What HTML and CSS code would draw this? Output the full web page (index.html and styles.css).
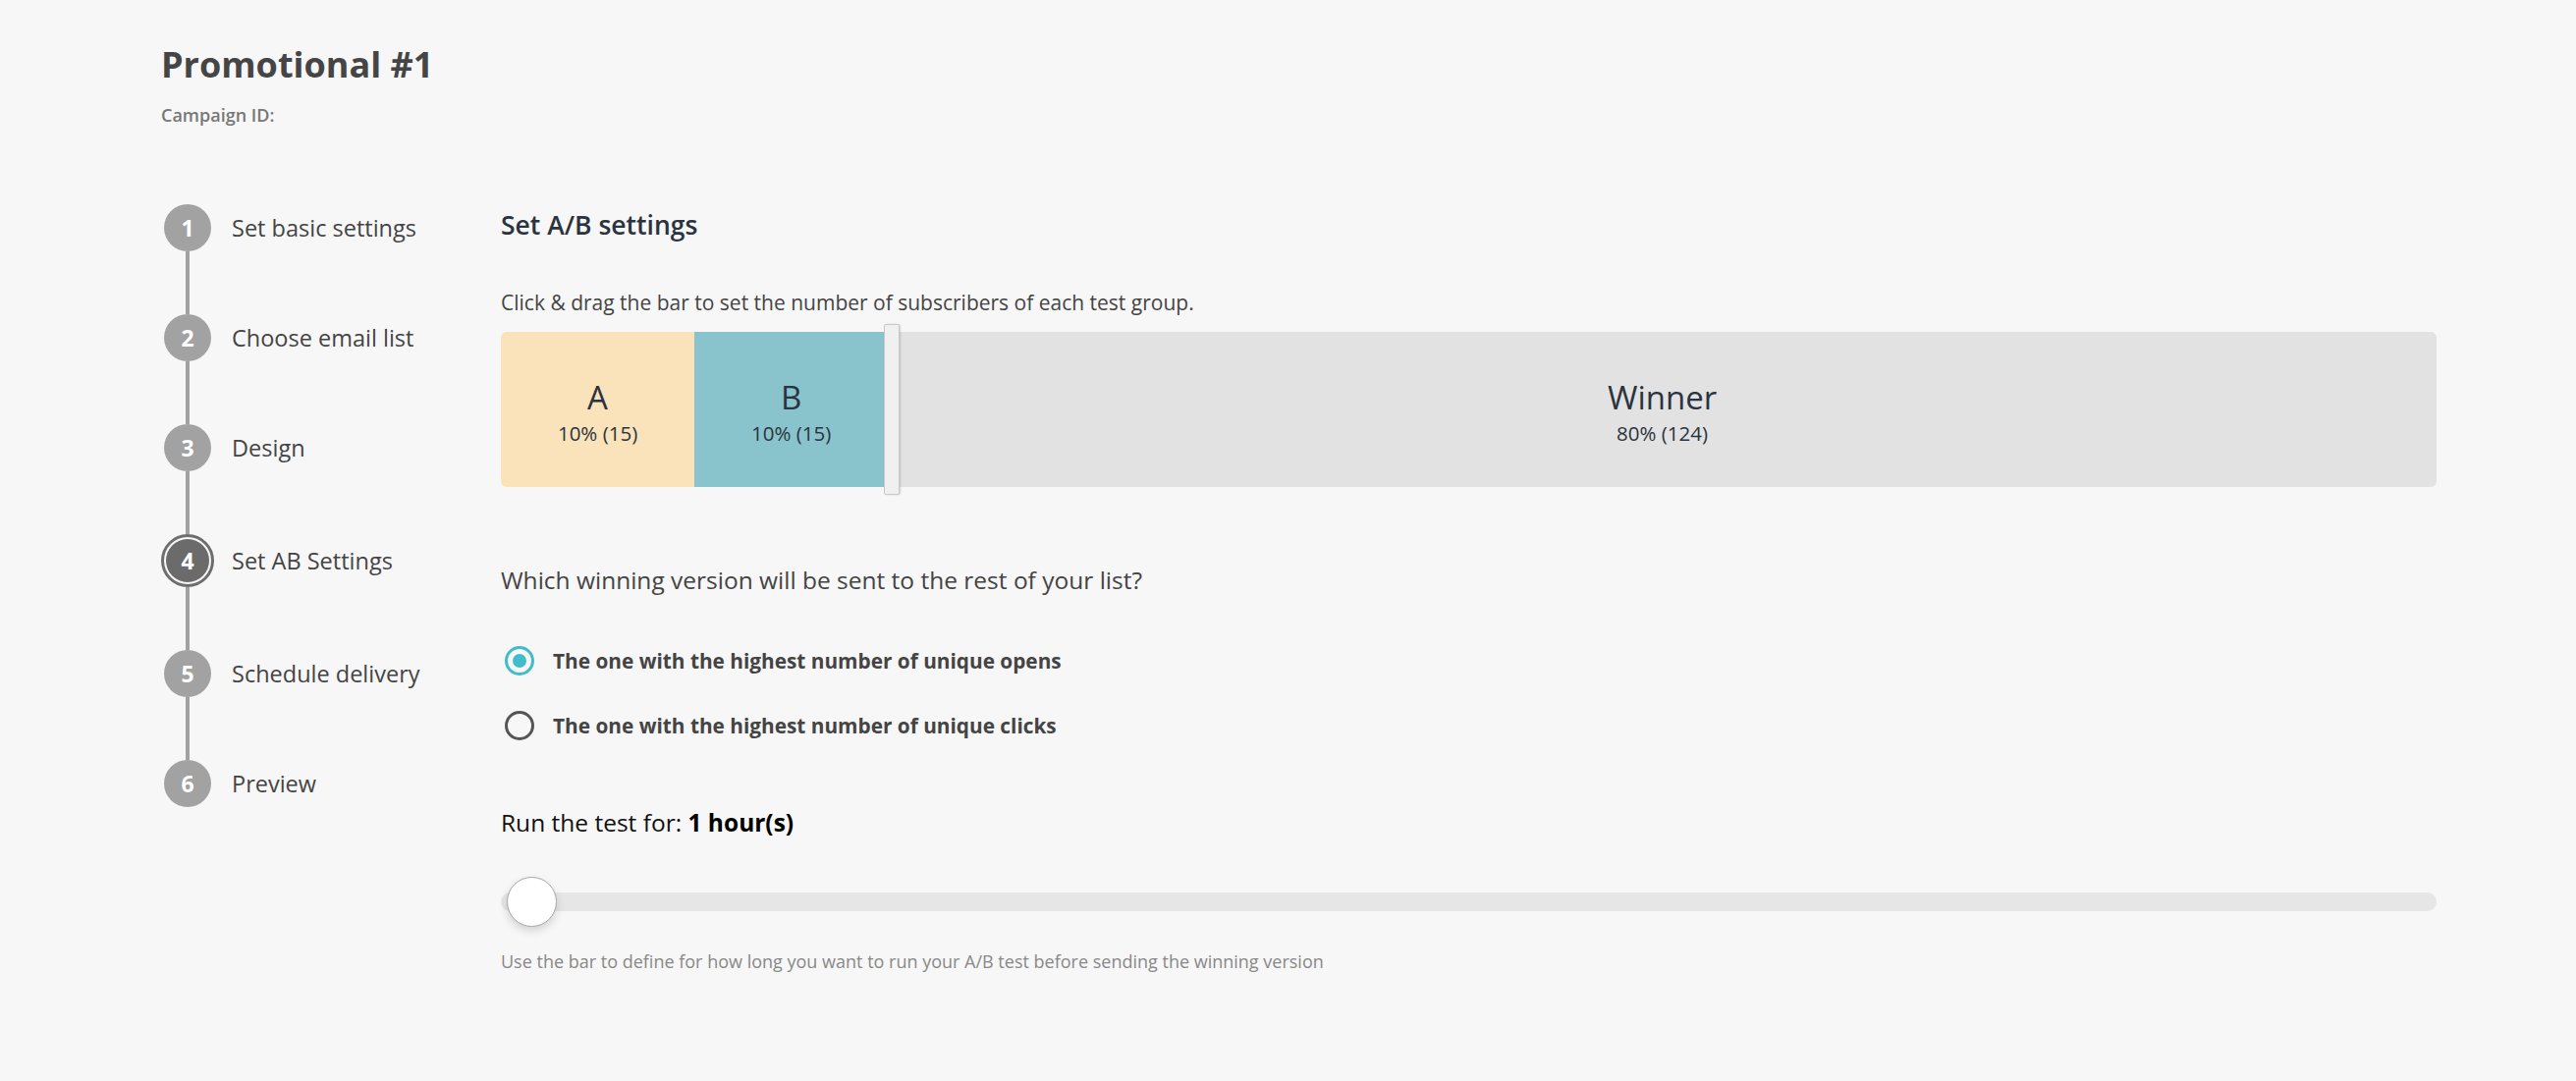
FILE: index.html
```html
<!DOCTYPE html>
<html lang="en">
<head>
<meta charset="utf-8">
<title>Promotional #1 - Set A/B settings</title>
<link rel="stylesheet" href="styles.css">
</head>
<body>
<div class="page">
  <header class="header">
    <h1 class="title">Promotional #1</h1>
    <div class="campaign-id">Campaign ID:</div>
  </header>
  <div class="layout">
    <nav class="steps">
      <div class="step"><span class="circle">1</span><span class="step-label">Set basic settings</span></div>
      <div class="connector"></div>
      <div class="step"><span class="circle">2</span><span class="step-label">Choose email list</span></div>
      <div class="connector"></div>
      <div class="step"><span class="circle">3</span><span class="step-label">Design</span></div>
      <div class="connector"></div>
      <div class="step step-active"><span class="circle circle-active">4</span><span class="step-label">Set AB Settings</span></div>
      <div class="connector"></div>
      <div class="step"><span class="circle">5</span><span class="step-label">Schedule delivery</span></div>
      <div class="connector"></div>
      <div class="step"><span class="circle">6</span><span class="step-label">Preview</span></div>
    </nav>
    <main class="main">
      <h2 class="section-title">Set A/B settings</h2>
      <p class="desc">Click &amp; drag the bar to set the number of subscribers of each test group.</p>
      <div class="split-bar">
        <div class="seg seg-a" style="width:10%"><span class="seg-name">A</span><span class="seg-val">10% (15)</span></div>
        <div class="seg seg-b" style="width:10%"><span class="seg-name">B</span><span class="seg-val">10% (15)</span></div>
        <div class="seg seg-w"><span class="seg-name">Winner</span><span class="seg-val">80% (124)</span></div>
        <div class="split-handle" style="left:20%"></div>
      </div>
      <h3 class="question">Which winning version will be sent to the rest of your list?</h3>
      <div class="radios">
        <label class="radio-row"><span class="radio radio-checked"></span><span class="radio-label">The one with the highest number of unique opens</span></label>
        <label class="radio-row"><span class="radio"></span><span class="radio-label">The one with the highest number of unique clicks</span></label>
      </div>
      <div class="run-label">Run the test for: <strong>1 hour(s)</strong></div>
      <div class="range">
        <div class="range-thumb"></div>
      </div>
      <p class="help">Use the bar to define for how long you want to run your A/B test before sending the winning version</p>
    </main>
  </div>
</div>
</body>
</html>
```

FILE: styles.css
```css
* { box-sizing: border-box; }
html, body { margin: 0; padding: 0; }
body {
  background: #f7f7f7;
  font-family: "Open Sans", "Liberation Sans", sans-serif;
  color: #444;
  width: 2623px;
  height: 1101px;
  overflow: hidden;
}
.page {
  padding: 46px 142px 0 164px;
}
.title {
  margin: 0;
  font-size: 36px;
  line-height: 40px;
  font-weight: 700;
  color: #454545;
}
.campaign-id {
  margin-top: 20px;
  font-size: 18px;
  line-height: 22px;
  font-weight: 600;
  color: #777;
}
.layout {
  display: flex;
  margin-top: 80px;
}
.steps {
  width: 346px;
  flex: none;
  display: flex;
  flex-direction: column;
  padding-left: 3px;
}
.step {
  display: flex;
  align-items: center;
  height: 48px;
}
.step-active {
  height: 54px;
  margin-left: -3px;
}
.step-active .step-label { margin-left: 18px; }
.circle {
  width: 48px;
  height: 48px;
  border-radius: 50%;
  background: #a2a2a2;
  color: #fff;
  font-weight: 700;
  font-size: 23px;
  display: flex;
  align-items: center;
  justify-content: center;
  flex: none;
}
.circle-active {
  width: 54px;
  height: 54px;
  border: 3px solid #6e6e6e;
  padding: 2px;
  background: #6b6b6b;
  background-clip: content-box;
}
.step-label {
  margin-left: 21px;
  font-size: 23.5px;
  color: #444;
}
.connector {
  width: 4px;
  height: 64px;
  margin-left: 22px;
  background: #a2a2a2;
}
.main {
  flex: 1;
  padding-top: 6px;
}
.section-title {
  margin: 0;
  font-size: 26.5px;
  line-height: 30px;
  font-weight: 600;
  color: #2b3340;
}
.desc {
  margin: 52px 0 0;
  font-size: 21px;
  line-height: 24px;
  color: #444;
}
.split-bar {
  position: relative;
  display: flex;
  height: 158px;
  margin-top: 18px;
}
.seg {
  display: flex;
  flex-direction: column;
  align-items: center;
  justify-content: center;
  color: #2b3340;
  padding-top: 6px;
}
.seg-a { background: #fae3ba; border-radius: 6px 0 0 6px; }
.seg-b { background: #89c4cc; }
.seg-w { background: #e2e2e2; flex: 1; border-radius: 0 6px 6px 0; }
.seg-name {
  font-size: 33px;
  line-height: 38px;
}
.seg-val {
  font-size: 20.5px;
  line-height: 26px;
  margin-top: 4px;
}
.split-handle {
  position: absolute;
  top: -8px;
  bottom: -8px;
  width: 16px;
  margin-left: -4px;
  background: #f0f0f0;
  border: 1px solid #c9c9c9;
  border-radius: 2px;
  box-shadow: 1px 0 2px rgba(0,0,0,0.15);
}
.question {
  margin: 80px 0 0;
  font-size: 24.5px;
  line-height: 30px;
  font-weight: 400;
  color: #444;
}
.radios {
  margin-top: 52px;
  display: flex;
  flex-direction: column;
  gap: 36px;
}
.radio-row {
  display: flex;
  align-items: center;
  height: 30px;
}
.radio {
  width: 30px;
  height: 30px;
  border-radius: 50%;
  border: 3px solid #555;
  flex: none;
  margin-left: 4px;
  display: flex;
  align-items: center;
  justify-content: center;
}
.radio-checked {
  border-color: #41bccc;
}
.radio-checked::after {
  content: "";
  width: 14px;
  height: 14px;
  border-radius: 50%;
  background: #41bccc;
}
.radio-label {
  margin-left: 19px;
  font-size: 20.8px;
  font-weight: 700;
  color: #444;
}
.run-label {
  margin-top: 69px;
  font-size: 24.5px;
  line-height: 30px;
  color: #111;
}
.run-label strong { font-weight: 700; color: #000; }
.range {
  position: relative;
  margin-top: 56px;
  height: 19px;
  border-radius: 10px;
  background: #e6e6e6;
}
.range-thumb {
  position: absolute;
  left: 6px;
  top: -16px;
  width: 51px;
  height: 51px;
  border-radius: 50%;
  background: #fff;
  border: 1px solid #a8a8a8;
  box-shadow: 0 4px 8px rgba(0,0,0,0.15);
}
.help {
  margin: 40px 0 0;
  font-size: 18px;
  line-height: 22px;
  color: #888;
}
```
